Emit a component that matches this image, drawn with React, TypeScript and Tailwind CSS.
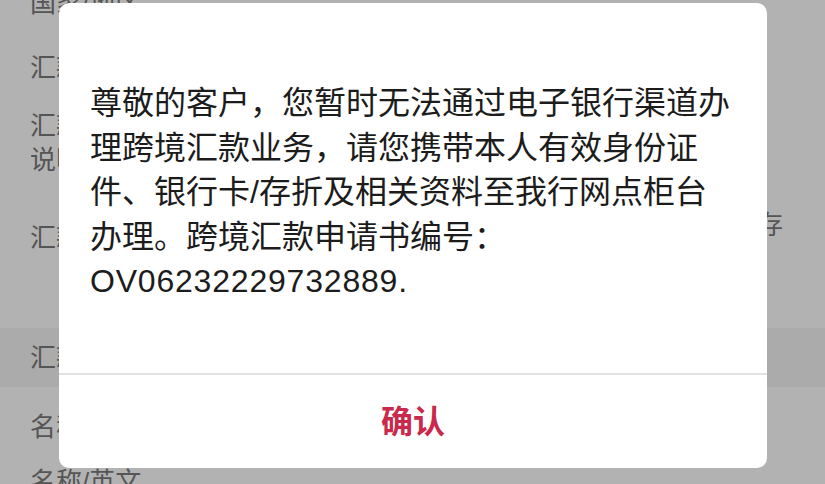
const bodyFont = { fontFamily: '"Liberation Sans", "Noto Sans CJK SC", sans-serif' };

const lines = [
  '尊敬的客户，您暂时无法通过电子银行渠道办',
  '理跨境汇款业务，请您携带本人有效身份证',
  '件、银行卡/存折及相关资料至我行网点柜台',
  '办理。跨境汇款申请书编号：',
];

function BackgroundForm() {
  return (
    <div className="flex flex-col text-[26px] leading-[30px] text-[#555]" style={bodyFont}>
      <div className="-mt-[12px] px-[30px]">国家/地区</div>
      <div className="mt-[35px] px-[30px]">汇款金额</div>
      <div className="mt-[26px] px-[30px] leading-[34px]">
        <div>汇款用途</div>
        <div>说明</div>
      </div>
      <div className="mt-[31px] flex items-start justify-between px-[30px]">
        <span className="mt-[15px]">汇款账户</span>
        <span className="mt-[2px] pr-[12px]">活期存</span>
      </div>
      <div className="mt-[75px] flex h-[59px] items-center bg-[#ababab] px-[30px]">
        汇款人信息
      </div>
      <div className="mt-[25px] px-[30px]">名称</div>
      <div className="mt-[25px] px-[30px]">名称/英文</div>
    </div>
  );
}

export default function App() {
  return (
    <div className="relative h-[484px] w-full overflow-hidden bg-[#b2b2b2]">
      <BackgroundForm />

      <div className="absolute left-[59px] top-[3px] flex h-[465px] w-[708px] flex-col rounded-[10px] bg-white">
        <div
          className="h-[370px] pl-[31px] pr-[20px] pt-[78px] text-[32px] leading-[44.5px] text-[#1c1c1c]"
          style={bodyFont}
        >
          {lines.map((line) => (
            <div key={line} className="whitespace-nowrap">
              {line}
            </div>
          ))}
          <div className="whitespace-nowrap tracking-[0.8px]">OV06232229732889.</div>
        </div>
        <div className="h-[2px] bg-[#e2e2e2]" />
        <button
          className="flex flex-1 items-center justify-center text-[32px] font-bold text-[#c92a4b]"
          style={bodyFont}
        >
          确认
        </button>
      </div>
    </div>
  );
}
